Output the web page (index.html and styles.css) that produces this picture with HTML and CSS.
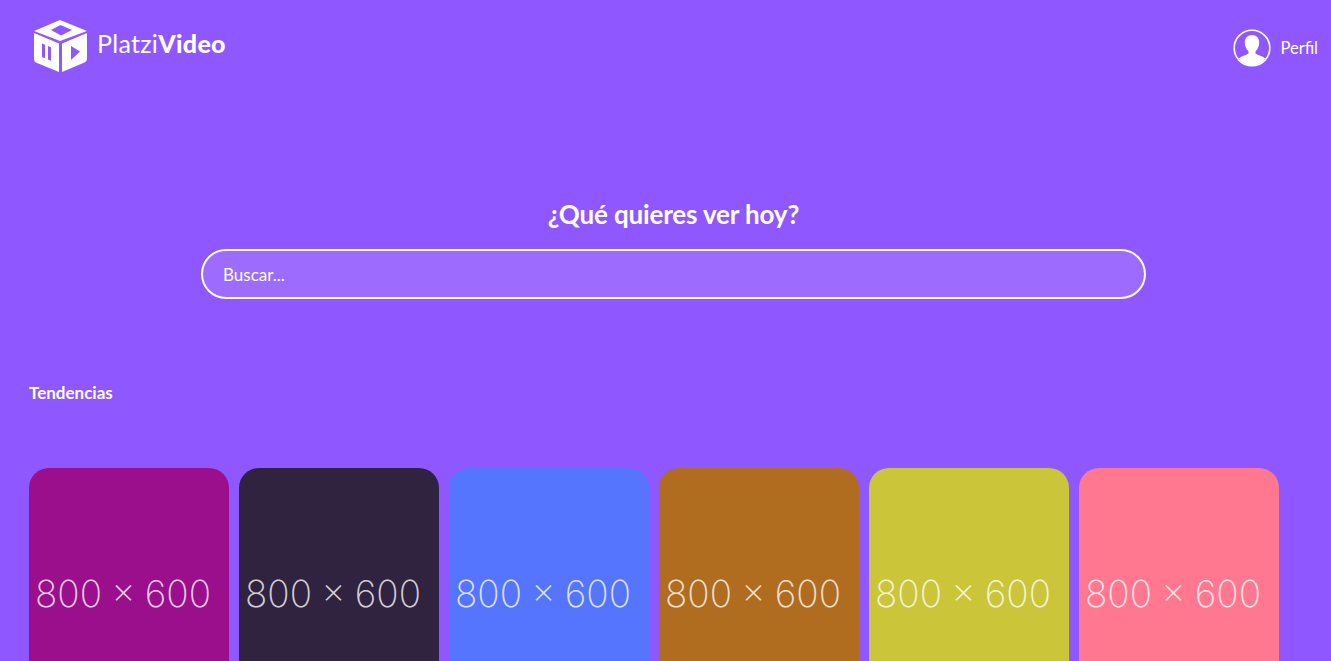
FILE: index.html
```html
<!DOCTYPE html>
<html lang="es">

<head>
	<meta charset="utf-8">
	<meta name="viewport" content="width=device-width, initial-scale=1.0">
	<title>Platzi Video</title>
	<link rel="stylesheet" href="styles.css">
</head>

<body>
	<!-- header -->
	<header class="header">
		<div class="logo">
			<svg class="logo-icon" width="56" height="54" viewBox="0 0 56 54">
				<path fill="#fff" fill-rule="evenodd" d="M28 1 55 12 28 22 2 12Z M19 11 28.500 6 40 11 29 16.500Z"/>
				<path fill="#fff" fill-rule="evenodd" d="M2 14 27 24.500V53L5 44Q2 43 2 40Z M10 24.500V38L13 39.200V25.700Z M16 27V40.500L19 41.700V28.200Z"/>
				<path fill="#fff" fill-rule="evenodd" d="M30 24.500 55 14V40Q55 42.500 52.500 43.500L30 53Z M39 27V41L48 32.500Z"/>
			</svg>
			<span class="logo-text">Platzi<b>Video</b></span>
		</div>
		<div class="profile">
			<svg class="profile-icon" width="38" height="38" viewBox="0 0 38 38">
				<circle cx="19" cy="19" r="17.800" fill="none" stroke="#fff" stroke-width="1.600"/>
				<path fill="#fff" d="M19 6C14.500 6 11.800 9 11.800 13.500 11.800 17.500 13.500 20.500 15.500 22.200V24.500C13 26.300 8.500 26.800 5.800 29.500 9 33.800 14 36.500 19 36.500 24 36.500 29 33.800 32.200 29.500 29.500 26.800 25 26.300 22.500 24.500V22.200C24.500 20.500 26.200 17.500 26.200 13.500 26.200 9 23.500 6 19 6Z"/>
			</svg>
			<span>Perfil</span>
		</div>
	</header>

	<!-- search -->
	<section class="search">
		<h2 class="search-title">¿Qué quieres ver hoy?</h2>
		<input class="search-input" type="text" placeholder="Buscar...">
	</section>

	<!-- trends -->
	<section class="trends">
		<h3 class="trends-title">Tendencias</h3>
		<div class="carousel">
			<div class="card card-1"><span>800 × 600</span></div>
			<div class="card card-2"><span>800 × 600</span></div>
			<div class="card card-3"><span>800 × 600</span></div>
			<div class="card card-4"><span>800 × 600</span></div>
			<div class="card card-5"><span>800 × 600</span></div>
			<div class="card card-6"><span>800 × 600</span></div>
		</div>
	</section>
</body>

</html>
```

FILE: styles.css
```css
html, body {
	height: 100%;
	overflow: hidden;
}

body {
	margin: 0;
	background-color: #8f57ff;
	color: white;
	font-family: Lato, "Open Sans", sans-serif;
}

/* header */
.header {
	display: flex;
	justify-content: space-between;
	height: 100px;
	padding: 19px 13px 0 32px;
	box-sizing: border-box;
}

.logo {
	display: flex;
	align-items: center;
	align-self: flex-start;
	gap: 9px;
}

.logo-text {
	font-size: 25px;
	font-weight: 400;
	letter-spacing: 0.3px;
	margin-top: -6px;
}

.logo-text b {
	font-weight: 900;
}

.profile {
	display: flex;
	align-items: center;
	align-self: flex-start;
	gap: 9px;
	margin-top: 10px;
	font-size: 16.500px;
}

/* search */
.search {
	display: flex;
	flex-direction: column;
	align-items: center;
	padding: 96px 0 0 16px;
}

.search-title {
	margin: 0 0 16px;
	font-size: 26px;
	font-weight: 700;
	line-height: 37px;
	letter-spacing: -0.15px;
}

.search-input {
	box-sizing: border-box;
	width: 945px;
	height: 50px;
	padding: 0 20px;
	border: 2px solid white;
	border-radius: 25px;
	outline: none;
	background-color: rgba(255, 255, 255, 0.13);
	color: white;
	font-family: inherit;
	font-size: 17px;
}

.search-input::placeholder {
	color: white;
	opacity: 1;
}

/* trends */
.trends {
	padding: 84px 0 0 29px;
}

.trends-title {
	margin: 0 0 65px;
	font-size: 17px;
	font-weight: 700;
	line-height: 20px;
}

.carousel {
	display: flex;
	gap: 10px;
}

.card {
	display: flex;
	align-items: center;
	flex: none;
	width: 200px;
	height: 250px;
	padding-left: 6px;
	box-sizing: border-box;
	border-radius: 20px;
	color: rgba(255, 255, 255, 0.8);
	font-family: Inter, sans-serif;
	font-size: 37px;
	font-weight: 200;
	word-spacing: -1px;
	white-space: nowrap;
}

.card-1 { background-color: #9b0f8c; }
.card-2 { background-color: #302340; }
.card-3 { background-color: #5575ff; }
.card-4 { background-color: #b06d1f; }
.card-5 { background-color: #cbc539; }
.card-6 { background-color: #ff7890; }
```
